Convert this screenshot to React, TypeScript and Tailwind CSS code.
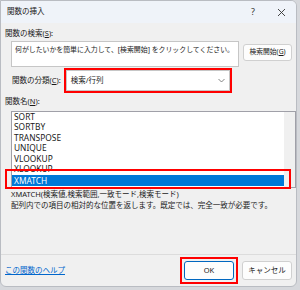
const items = ["SORT", "SORTBY", "TRANSPOSE", "UNIQUE", "VLOOKUP", "XLOOKUP", "XMATCH"];

const App: React.FC = () => {
  return (
    <div className="w-[300px] h-[290px] bg-[#d6d8dc] font-['Noto_Sans','Noto_Sans_CJK_JP',sans-serif] text-[#1a1a1a] overflow-hidden">
      <div className="relative w-[297px] h-[287px] bg-[#f0f0f0] border border-[#b9bcc2] rounded-b-[6px] rounded-tr-[6px] flex flex-col overflow-hidden">
        {/* title bar */}
        <div className="h-[22px] bg-[#eff3f9] flex items-center pl-[6px] pr-[10px] shrink-0">
          <span className="text-[7.5px]">関数の挿入</span>
          <span className="ml-auto text-[9px] text-[#333]">?</span>
          <svg className="ml-[22px]" width="9" height="9" viewBox="0 0 9 9">
            <path d="M1 1L8 8M8 1L1 8" stroke="#333" strokeWidth="0.9" />
          </svg>
        </div>

        <div className="flex-1 flex flex-col px-[4px]">
          <div className="text-[7.5px] leading-[10px] mt-[5px]">
            関数の検索(<span className="underline">S</span>):
          </div>
          <div className="flex mt-[3px]">
            <div className="ml-[6px] w-[233px] h-[26px] bg-white border border-[#c6c6c6] px-[3px] pt-[3px] text-[6.9px] leading-[10px] whitespace-nowrap overflow-hidden">
              何がしたいかを簡単に入力して、[検索開始] をクリックしてください。
            </div>
            <div className="ml-[4px] mt-[3px] w-[50px] h-[17px] bg-[#fdfdfd] border border-[#d0d0d0] rounded-[3px] flex items-center justify-center text-[6.8px] whitespace-nowrap">
              検索開始(<span className="underline">G</span>)
            </div>
          </div>

          <div className="flex items-center mt-[1px]">
            <span className="ml-[7px] text-[7.5px]">
              関数の分類(<span className="underline">C</span>):
            </span>
            <div className="ml-[3px] border-2 border-[#ff0000] p-0">
              <div className="w-[164px] h-[21px] bg-white border border-[#c6c6c6] flex items-center pl-[4px] text-[7.5px]">
                検索/行列
                <svg className="ml-auto mr-[4px]" width="7" height="5" viewBox="0 0 7 5">
                  <path d="M0.5 1L3.5 4L6.5 1" fill="none" stroke="#666" strokeWidth="0.8" />
                </svg>
              </div>
            </div>
          </div>

          <div className="text-[7.5px] leading-[10px] mt-[3px]">
            関数名(<span className="underline">N</span>):
          </div>

          <div className="relative ml-[6px] mt-[5px] w-[285px] h-[77px] bg-white border border-[#a0a0a8] flex">
            <div className="flex-1 overflow-hidden">
              {items.map((it) => (
                <div
                  key={it}
                  className={
                    it === "XMATCH"
                      ? "h-[11px] leading-[11px] text-[8.4px] pl-[2px] bg-[#0078d7] text-white mt-[1px]"
                      : "h-[10.4px] leading-[10.4px] text-[8.4px] pl-[2px]"
                  }
                >
                  {it}
                </div>
              ))}
            </div>
            <div className="w-[11px] bg-[#f0f0f0] flex flex-col items-center justify-end pb-[7px]">
              <div className="w-[2px] h-[11px] bg-[#8a8a8a]" />
            </div>
          </div>

          <div className="text-[7.5px] leading-[11px] mt-[1px] ml-[6px] whitespace-nowrap">
            XMATCH(検索値,検索範囲,一致モード,検索モード)
          </div>
          <div className="text-[7.5px] leading-[11px] ml-[6px] whitespace-nowrap">
            配列内での項目の相対的な位置を返します。既定では、完全一致が必要です。
          </div>

          <div className="flex-1" />
        </div>

        <div className="h-[32px] border-t border-[#dcdcdc] flex items-center px-[4px] shrink-0">
          <span className="text-[7.5px] text-[#0066cc] underline">この関数のヘルプ</span>
          <div className="ml-auto border-2 border-[#ff0000] p-[2px]">
            <div className="w-[50px] h-[19px] bg-[#fdfdfd] border border-[#0067c0] rounded-[3px] flex items-center justify-center text-[7.5px]">
              OK
            </div>
          </div>
          <div className="ml-[4px] w-[50px] h-[19px] bg-[#fdfdfd] border border-[#d0d0d0] rounded-[3px] flex items-center justify-center text-[7.5px]">
            キャンセル
          </div>
        </div>

        {/* annotation box around the selected list item */}
        <div className="absolute left-[4px] top-[168px] w-[286px] h-[20px] border-2 border-[#ff0000] pointer-events-none" />
      </div>
    </div>
  );
};

export default App;
